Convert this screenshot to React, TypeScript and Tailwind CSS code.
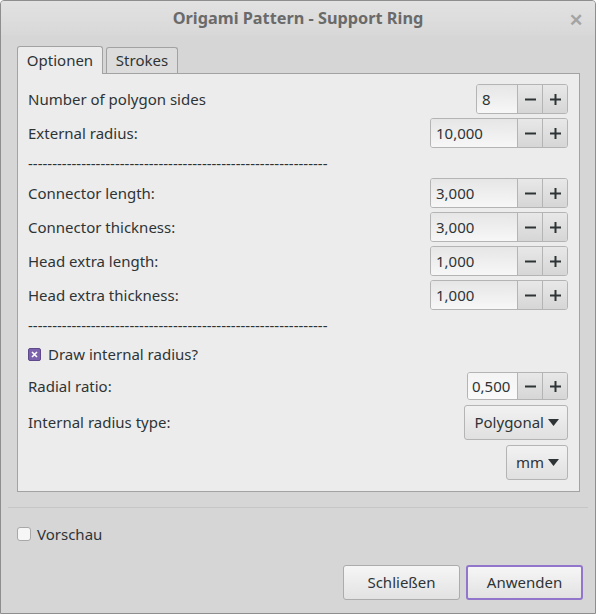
import { useState } from "react"

const font = { fontFamily: '"Noto Sans", "Open Sans", sans-serif' }

function Spinner({ value, width }: { value: string; width: string }) {
  return (
    <div className="flex h-[30px] rounded-[3px] border border-[#b4b4b4] overflow-hidden">
      <div
        className={`${width} flex items-center bg-gradient-to-b from-[#e6e6e6] to-[#f7f7f7] px-[5px] text-[15px] text-[#2e3436]`}
      >
        {value}
      </div>
      <button className="flex w-[25px] items-center justify-center border-l border-[#b4b4b4] bg-gradient-to-b from-[#e8e8e8] to-[#d6d6d6]">
        <svg width="11" height="11" viewBox="0 0 11 11">
          <rect x="0" y="4.5" width="11" height="2" fill="#2e3436" />
        </svg>
      </button>
      <button className="flex w-[25px] items-center justify-center border-l border-[#b4b4b4] bg-gradient-to-b from-[#e8e8e8] to-[#d6d6d6]">
        <svg width="11" height="11" viewBox="0 0 11 11">
          <rect x="0" y="4.5" width="11" height="2" fill="#2e3436" />
          <rect x="4.5" y="0" width="2" height="11" fill="#2e3436" />
        </svg>
      </button>
    </div>
  )
}

function Row({ label, children, h = "h-[30px]" }: { label: string; children: React.ReactNode; h?: string }) {
  return (
    <div className={`flex ${h} items-center justify-between`}>
      <span className="text-[15px] text-[#2e3436]">{label}</span>
      {children}
    </div>
  )
}

function Dropdown({ label }: { label: string }) {
  return (
    <button className="flex h-[35px] items-center gap-[4px] rounded-[3px] border border-[#b4b4b4] bg-gradient-to-b from-[#f2f2f2] to-[#e0e0e0] pl-[9px] pr-[8px] text-[15px] text-[#2e3436]">
      {label}
      <svg width="11" height="7" viewBox="0 0 11 7">
        <path d="M0 0 L11 0 L5.5 7 Z" fill="#2e3436" />
      </svg>
    </button>
  )
}

const dashes = "-".repeat(62)

export default function App() {
  const [preview, setPreview] = useState(false)
  return (
    <div
      style={font}
      className="flex h-[614px] w-[596px] flex-col overflow-hidden rounded-t-[4px] border border-[#8e8e8e] bg-[#d6d6d6]"
    >
      <div className="relative flex h-[34px] shrink-0 items-center justify-center bg-gradient-to-b from-[#e2e2e2] to-[#d8d8d8]">
        <span className="text-[16.3px] font-bold text-[#6a6a6a]">Origami Pattern - Support Ring</span>
        <span className="absolute right-[12px] top-[6px] text-[17px] font-bold text-[#a4a4a4]">✕</span>
      </div>

      <div className="ml-[16px] mt-[11px] flex items-end gap-[3px]">
        <div className="relative z-10 -mb-px flex h-[28px] w-[86px] items-center justify-center rounded-t-[3px] border border-b-0 border-[#a2a2a2] bg-[#ececec] text-[15px] text-[#2e3436]">
          Optionen
        </div>
        <div className="flex h-[26px] w-[72px] items-center justify-center rounded-t-[3px] border border-b-0 border-[#a2a2a2] bg-[#dcdcdc] text-[15px] text-[#2e3436]">
          Strokes
        </div>
      </div>

      <div className="ml-[16px] flex h-[419px] w-[563px] flex-col gap-[4px] border border-[#a2a2a2] bg-[#ececec] pl-[10px] pr-[11px] pt-[10px]">
        <Row label="Number of polygon sides">
          <Spinner value="8" width="w-[40px]" />
        </Row>
        <Row label="External radius:">
          <Spinner value="10,000" width="w-[86px]" />
        </Row>
        <div className="flex h-[22px] items-center text-[15px] leading-none text-[#2e3436]">{dashes}</div>
        <Row label="Connector length:">
          <Spinner value="3,000" width="w-[86px]" />
        </Row>
        <Row label="Connector thickness:">
          <Spinner value="3,000" width="w-[86px]" />
        </Row>
        <Row label="Head extra length:">
          <Spinner value="1,000" width="w-[86px]" />
        </Row>
        <Row label="Head extra thickness:">
          <Spinner value="1,000" width="w-[86px]" />
        </Row>
        <div className="flex h-[22px] items-center text-[15px] leading-none text-[#2e3436]">{dashes}</div>
        <div className="flex h-[28px] items-center gap-[7px]">
          <span className="flex h-[13px] w-[13px] items-center justify-center rounded-[2px] border border-[#5e4a8a] bg-[#7c62ad]">
            <svg width="7" height="7" viewBox="0 0 7 7">
              <path d="M1 1 L6 6 M6 1 L1 6" stroke="#ffffff" strokeWidth="1.6" />
            </svg>
          </span>
          <span className="text-[15px] text-[#2e3436]">Draw internal radius?</span>
        </div>
        <Row label="Radial ratio:" h="h-[28px]">
          <div className="flex h-[28px] rounded-[3px] border border-[#b4b4b4] overflow-hidden">
            <div className="flex w-[49px] items-center bg-gradient-to-b from-[#f4f4f4] to-[#fafafa] px-[4px] text-[15px] text-[#2e3436]">
              0,500
            </div>
            <button className="flex w-[25px] items-center justify-center border-l border-[#b4b4b4] bg-gradient-to-b from-[#e8e8e8] to-[#d6d6d6]">
              <svg width="11" height="11" viewBox="0 0 11 11">
                <rect x="0" y="4.5" width="11" height="2" fill="#2e3436" />
              </svg>
            </button>
            <button className="flex w-[25px] items-center justify-center border-l border-[#b4b4b4] bg-gradient-to-b from-[#e8e8e8] to-[#d6d6d6]">
              <svg width="11" height="11" viewBox="0 0 11 11">
                <rect x="0" y="4.5" width="11" height="2" fill="#2e3436" />
                <rect x="4.5" y="0" width="2" height="11" fill="#2e3436" />
              </svg>
            </button>
          </div>
        </Row>
        <Row label="Internal radius type:" h="h-[35px] mt-[1px]">
          <Dropdown label="Polygonal" />
        </Row>
        <div className="flex h-[35px] justify-end mt-[1px]">
          <Dropdown label="mm" />
        </div>
      </div>

      <div className="mx-[7px] mt-[15px] h-px bg-[#c6c6c6]" />

      <label className="ml-[16px] mt-[15px] flex items-center gap-[6px]">
        <input
          type="checkbox"
          checked={preview}
          onChange={(e) => setPreview(e.target.checked)}
          className="h-[14px] w-[14px] appearance-none rounded-[3px] border border-[#a8a8a8] bg-[#f6f6f6]"
        />
        <span className="text-[15px] text-[#2e3436]">Vorschau</span>
      </label>

      <div className="mr-[12px] mt-[19px] flex justify-end gap-[6px]">
        <button className="h-[35px] w-[117px] rounded-[3px] border border-[#acacac] bg-gradient-to-b from-[#f6f6f6] to-[#e2e2e2] text-[15px] text-[#2e3436]">
          Schließen
        </button>
        <button className="h-[35px] w-[117px] rounded-[3px] border-2 border-[#9176cc] bg-gradient-to-b from-[#f6f6f6] to-[#e2e2e2] text-[15px] text-[#2e3436]">
          Anwenden
        </button>
      </div>
    </div>
  )
}
